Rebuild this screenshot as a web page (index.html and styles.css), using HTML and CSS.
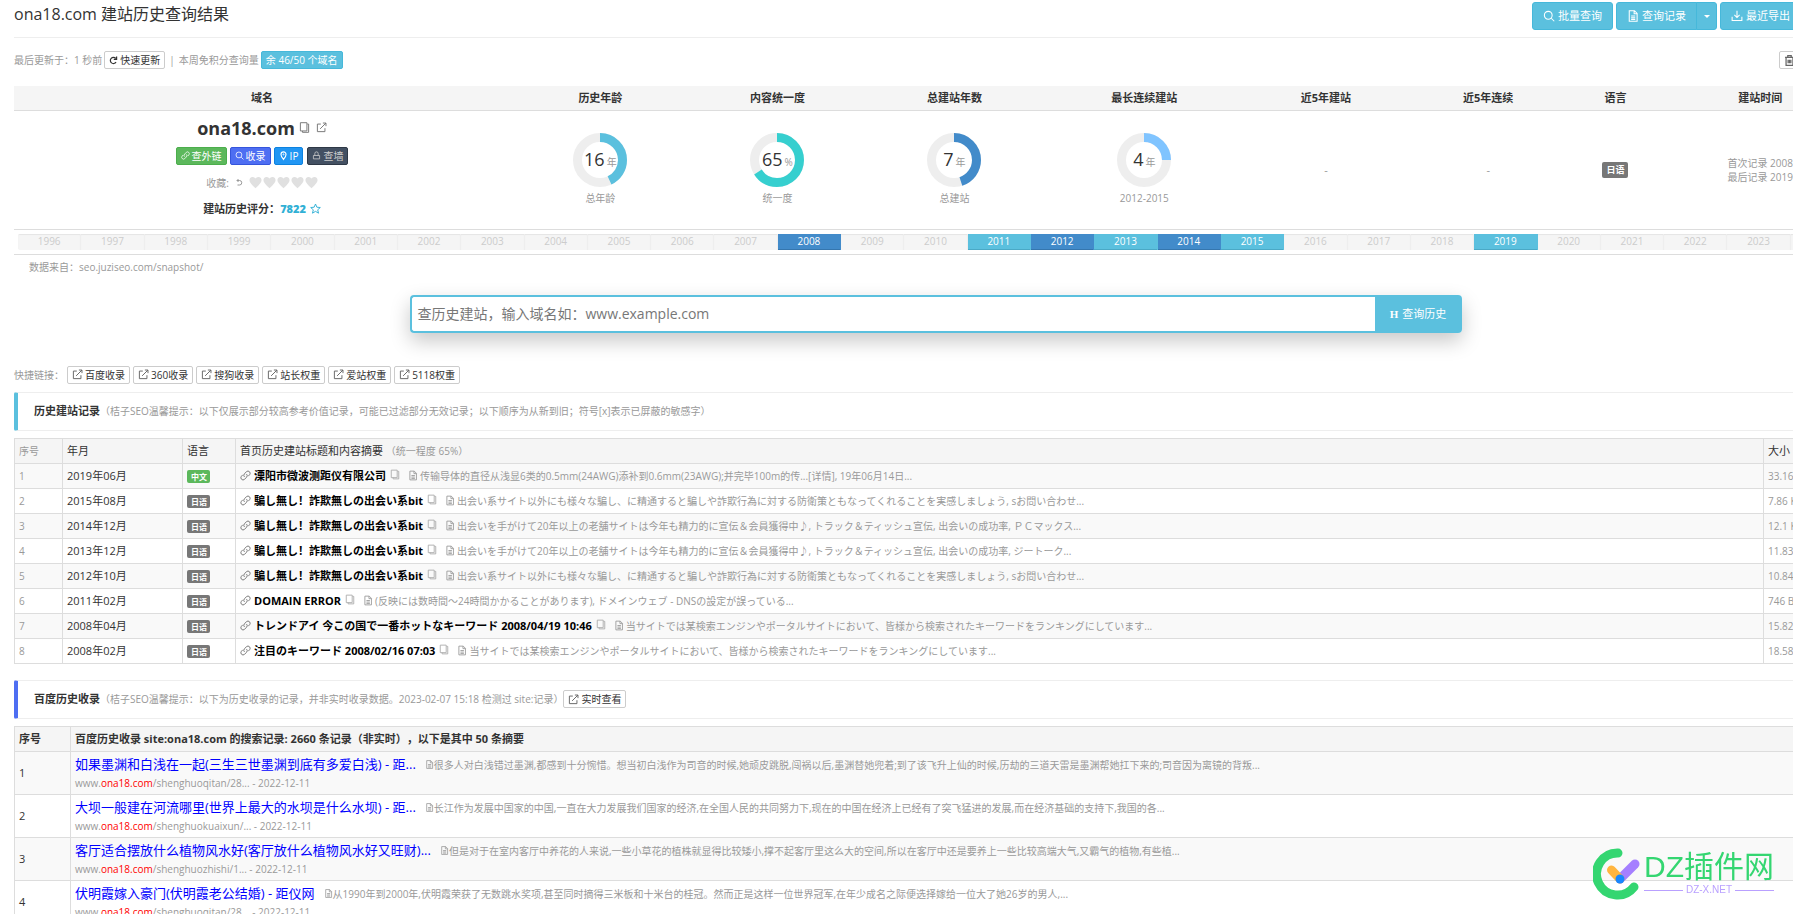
FILE: index.html
```html
<!DOCTYPE html>
<html lang="zh-CN">
<head>
<meta charset="utf-8">
<title>ona18.com 建站历史查询结果</title>
<link rel="stylesheet" href="styles.css">
</head>
<body>
<svg class="sprite" aria-hidden="true">
  <symbol id="search" viewBox="0 0 16 16"><circle cx="7" cy="7" r="5.2"/><path d="M11 11l4 4"/></symbol>
  <symbol id="doc" viewBox="0 0 16 16"><path d="M3 1h7l3.500 3.500V15H3zM9.500 1v4h4M5.500 8h5.500M5.500 10.500h5.500M5.500 12.700h5.500"/></symbol>
  <symbol id="download" viewBox="0 0 16 16"><path d="M8 1v9M4.500 6.500L8 10l3.500-3.500M1.500 9v5h13V9"/></symbol>
  <symbol id="refresh" viewBox="0 0 16 16"><path stroke-width="2.200" d="M12.500 11A5.500 5.500 0 1 1 12 4.200M13.500 1v5h-5"/></symbol>
  <symbol id="trash" viewBox="0 0 16 16"><path stroke-width="1.800" d="M1.500 3.500h13M5.500 3V1h5v2M3 4v11h10V4M6 7v5M8 7v5M10 7v5"/></symbol>
  <symbol id="copy" viewBox="0 0 16 16"><path d="M2 1h9.500v12H2zM12 3h2v12H5v-2"/></symbol>
  <symbol id="out" viewBox="0 0 16 16"><path d="M7 3H2v11h11V9M6 10l8.500-8.500M10 1.500h4.500V6"/></symbol>
  <symbol id="link" viewBox="0 0 16 16"><path d="M6.500 10a3.200 3.200 0 0 1 0-4.500l3-3.200a3.200 3.200 0 0 1 4.500 4.500L12 9M9.500 6a3.200 3.200 0 0 1 0 4.500l-3 3.200A3.200 3.200 0 0 1 2 9.200L4 7"/></symbol>
  <symbol id="pin" viewBox="0 0 16 16"><path stroke-width="2" d="M8 15C5 11 3.500 8.500 3.500 6a4.500 4.500 0 0 1 9 0C12.500 8.500 11 11 8 15z"/><circle cx="8" cy="6" r="1"/></symbol>
  <symbol id="lock" viewBox="0 0 16 16"><path d="M2.500 8h11v6h-11zM5 8V4.500a3 3 0 0 1 6 0V8"/></symbol>
  <symbol id="undo" viewBox="0 0 16 16"><path stroke-width="2" d="M4 4h5a4 4 0 0 1 0 9H5M7 1L4 4l3 3"/></symbol>
  <symbol id="heart" viewBox="0 0 16 16"><path class="solid" d="M8 15C3 10.500.5 8 .5 5A4 4 0 0 1 8 3.200 4 4 0 0 1 15.500 5C15.500 8 13 10.500 8 15z"/></symbol>
  <symbol id="star" viewBox="0 0 16 16"><path d="M8 1.500l2 4.600 5 .5-3.800 3.300 1.200 4.900L8 12.200l-4.400 2.600 1.200-4.900L1 6.600l5-.5z"/></symbol>
</svg>

<main class="page">
  <header class="titlebar">
    <h1>ona18.com 建站历史查询结果</h1>
    <div class="actions">
      <button class="btn"><svg class="ico"><use href="#search"/></svg>批量查询</button>
      <span class="group"><button class="btn"><svg class="ico"><use href="#doc"/></svg>查询记录</button><button class="btn caret" aria-label="展开"></button></span>
      <span class="group"><button class="btn"><svg class="ico"><use href="#download"/></svg>最近导出</button><button class="btn caret" aria-label="展开"></button></span>
    </div>
  </header>

  <div class="status">
    <span>最后更新于：1 秒前</span>
    <button class="mini dark"><svg class="ico"><use href="#refresh"/></svg>快速更新</button>
    <span class="sep">|</span>
    <span>本周免积分查询量</span>
    <a class="mini info" href="#">余 46/50 个域名</a>
    <button class="mini trash" aria-label="删除"><svg class="ico"><use href="#trash"/></svg></button>
  </div>

  <table class="summary">
    <colgroup><col class="c1"><col class="c2"><col class="c3"><col class="c2"><col class="c5"><col class="c6"><col class="c7"><col class="c8"><col></colgroup>
    <thead><tr><th>域名</th><th>历史年龄</th><th>内容统一度</th><th>总建站年数</th><th>最长连续建站</th><th>近5年建站</th><th>近5年连续</th><th>语言</th><th>建站时间</th></tr></thead>
    <tbody><tr>
      <td>
        <div class="domain"><b>ona18.com</b><svg class="ico"><use href="#copy"/></svg><svg class="ico"><use href="#out"/></svg></div>
        <div class="tags">
          <a class="mini green" href="#"><svg class="ico"><use href="#link"/></svg>查外链</a>
          <a class="mini indigo" href="#"><svg class="ico"><use href="#search"/></svg>收录</a>
          <a class="mini blue" href="#"><svg class="ico"><use href="#pin"/></svg>IP</a>
          <a class="mini slate" href="#"><svg class="ico"><use href="#lock"/></svg>查墙</a>
        </div>
        <div class="fav">收藏:<svg class="ico undo"><use href="#undo"/></svg><span class="hearts"><svg><use href="#heart"/></svg><svg><use href="#heart"/></svg><svg><use href="#heart"/></svg><svg><use href="#heart"/></svg><svg><use href="#heart"/></svg></span></div>
        <div class="score">建站历史评分：<b>7822</b><svg class="ico"><use href="#star"/></svg></div>
      </td>
      <td><div class="gauge"><svg viewBox="0 0 54 54"><circle class="track" cx="27" cy="27" r="22.5"/><circle class="arc cyan" cx="27" cy="27" r="22.5" pathLength="100" stroke-dasharray="43 100"/></svg><span class="num">16<small>年</small></span></div><div class="cap">总年龄</div></td>
      <td><div class="gauge"><svg viewBox="0 0 54 54"><circle class="track" cx="27" cy="27" r="22.5"/><circle class="arc teal" cx="27" cy="27" r="22.5" pathLength="100" stroke-dasharray="66 100"/></svg><span class="num">65<small>%</small></span></div><div class="cap">统一度</div></td>
      <td><div class="gauge"><svg viewBox="0 0 54 54"><circle class="track" cx="27" cy="27" r="22.5"/><circle class="arc navy" cx="27" cy="27" r="22.5" pathLength="100" stroke-dasharray="45 100"/></svg><span class="num">7<small>年</small></span></div><div class="cap">总建站</div></td>
      <td><div class="gauge"><svg viewBox="0 0 54 54"><circle class="track" cx="27" cy="27" r="22.5"/><circle class="arc sky" cx="27" cy="27" r="22.5" pathLength="100" stroke-dasharray="25 100"/></svg><span class="num">4<small>年</small></span></div><div class="cap">2012-2015</div></td>
      <td class="muted">-</td>
      <td class="muted">-</td>
      <td><span class="lang big">日语</span></td>
      <td class="muted dates">首次记录 2008<br>最后记录 2019</td>
    </tr></tbody>
  </table>

  <div class="timeline">
    <ol>
      <li>1996</li><li>1997</li><li>1998</li><li>1999</li><li>2000</li><li>2001</li><li>2002</li><li>2003</li><li>2004</li><li>2005</li><li>2006</li><li>2007</li><li class="on deep">2008</li><li>2009</li><li>2010</li><li class="on">2011</li><li class="on deep">2012</li><li class="on">2013</li><li class="on deep">2014</li><li class="on">2015</li><li>2016</li><li>2017</li><li>2018</li><li class="on">2019</li><li>2020</li><li>2021</li><li>2022</li><li>2023</li><li></li>
    </ol>
  </div>
  <p class="source">数据来自：seo.juziseo.com/snapshot/</p>

  <form class="search">
    <input type="text" aria-label="域名" placeholder="查历史建站，输入域名如：www.example.com">
    <button type="button"><b class="h">H</b>查询历史</button>
  </form>

  <nav class="quick">
    <span>快捷链接：</span>
    <a class="mini" href="#"><svg class="ico"><use href="#out"/></svg>百度收录</a>
    <a class="mini" href="#"><svg class="ico"><use href="#out"/></svg>360收录</a>
    <a class="mini" href="#"><svg class="ico"><use href="#out"/></svg>搜狗收录</a>
    <a class="mini" href="#"><svg class="ico"><use href="#out"/></svg>站长权重</a>
    <a class="mini" href="#"><svg class="ico"><use href="#out"/></svg>爱站权重</a>
    <a class="mini" href="#"><svg class="ico"><use href="#out"/></svg>5118权重</a>
  </nav>

  <div class="section"><h2>历史建站记录</h2><span>（桔子SEO温馨提示：以下仅展示部分较高参考价值记录，可能已过滤部分无效记录；以下顺序为从新到旧；符号[x]表示已屏蔽的敏感字）</span></div>

  <table class="grid history">
    <colgroup><col class="no"><col class="ym"><col class="lg"><col><col class="size"></colgroup>
    <thead><tr><th class="muted">序号</th><th>年月</th><th>语言</th><th>首页历史建站标题和内容摘要 <small>（统一程度 65%）</small></th><th>大小</th></tr></thead>
    <tbody>
      <tr><td>1</td><td>2019年06月</td><td><span class="lang zh">中文</span></td><td><svg class="ico chain"><use href="#link"/></svg><a href="#">溧阳市微波测距仪有限公司</a><svg class="ico cp"><use href="#copy"/></svg><svg class="ico dc"><use href="#doc"/></svg><small>传输导体的直径从浅显6类的0.5mm(24AWG)添补到0.6mm(23AWG);并完毕100m的传...[详情], 19年06月14日...</small></td><td>33.16 KB</td></tr>
      <tr><td>2</td><td>2015年08月</td><td><span class="lang">日语</span></td><td><svg class="ico chain"><use href="#link"/></svg><a href="#">騙し無し！詐欺無しの出会い系bit</a><svg class="ico cp"><use href="#copy"/></svg><svg class="ico dc"><use href="#doc"/></svg><small>出会い系サイト以外にも様々な騙し、に精通すると騙しや詐欺行為に対する防衛策ともなってくれることを実感しましょう, sお問い合わせ...</small></td><td>7.86 KB</td></tr>
      <tr><td>3</td><td>2014年12月</td><td><span class="lang">日语</span></td><td><svg class="ico chain"><use href="#link"/></svg><a href="#">騙し無し！詐欺無しの出会い系bit</a><svg class="ico cp"><use href="#copy"/></svg><svg class="ico dc"><use href="#doc"/></svg><small>出会いを手がけて20年以上の老舗サイトは今年も精力的に宣伝＆会員獲得中♪, トラック＆ティッシュ宣伝, 出会いの成功率, ＰＣマックス...</small></td><td>12.1 KB</td></tr>
      <tr><td>4</td><td>2013年12月</td><td><span class="lang">日语</span></td><td><svg class="ico chain"><use href="#link"/></svg><a href="#">騙し無し！詐欺無しの出会い系bit</a><svg class="ico cp"><use href="#copy"/></svg><svg class="ico dc"><use href="#doc"/></svg><small>出会いを手がけて20年以上の老舗サイトは今年も精力的に宣伝＆会員獲得中♪, トラック＆ティッシュ宣伝, 出会いの成功率, ジートーク...</small></td><td>11.83 KB</td></tr>
      <tr><td>5</td><td>2012年10月</td><td><span class="lang">日语</span></td><td><svg class="ico chain"><use href="#link"/></svg><a href="#">騙し無し！詐欺無しの出会い系bit</a><svg class="ico cp"><use href="#copy"/></svg><svg class="ico dc"><use href="#doc"/></svg><small>出会い系サイト以外にも様々な騙し、に精通すると騙しや詐欺行為に対する防衛策ともなってくれることを実感しましょう, sお問い合わせ...</small></td><td>10.84 KB</td></tr>
      <tr><td>6</td><td>2011年02月</td><td><span class="lang">日语</span></td><td><svg class="ico chain"><use href="#link"/></svg><a href="#">DOMAIN ERROR</a><svg class="ico cp"><use href="#copy"/></svg><svg class="ico dc"><use href="#doc"/></svg><small>(反映には数時間〜24時間かかることがあります), ドメインウェブ - DNSの設定が誤っている...</small></td><td>746 B</td></tr>
      <tr><td>7</td><td>2008年04月</td><td><span class="lang">日语</span></td><td><svg class="ico chain"><use href="#link"/></svg><a href="#">トレンドアイ 今この国で一番ホットなキーワード 2008/04/19 10:46</a><svg class="ico cp"><use href="#copy"/></svg><svg class="ico dc"><use href="#doc"/></svg><small>当サイトでは某検索エンジンやポータルサイトにおいて、皆様から検索されたキーワードをランキングにしています...</small></td><td>15.82 KB</td></tr>
      <tr><td>8</td><td>2008年02月</td><td><span class="lang">日语</span></td><td><svg class="ico chain"><use href="#link"/></svg><a href="#">注目のキーワード 2008/02/16 07:03</a><svg class="ico cp"><use href="#copy"/></svg><svg class="ico dc"><use href="#doc"/></svg><small>当サイトでは某検索エンジンやポータルサイトにおいて、皆様から検索されたキーワードをランキングにしています...</small></td><td>18.58 KB</td></tr>
    </tbody>
  </table>

  <div class="section baidu"><h2>百度历史收录</h2><span>（桔子SEO温馨提示：以下为历史收录的记录，并非实时收录数据。2023-02-07 15:18 检测过 site:记录）</span><a class="mini" href="#"><svg class="ico"><use href="#out"/></svg>实时查看</a></div>

  <table class="grid results">
    <colgroup><col class="idx"><col></colgroup>
    <thead><tr><th>序号</th><th>百度历史收录 site:ona18.com 的搜索记录: 2660 条记录（非实时），以下是其中 50 条摘要</th></tr></thead>
    <tbody>
      <tr><td>1</td><td><div class="hit"><a href="#">如果墨渊和白浅在一起(三生三世墨渊到底有多爱白浅) - 距...</a><svg class="ico"><use href="#doc"/></svg><small>很多人对白浅错过墨渊,都感到十分惋惜。想当初白浅作为司音的时候,她顽皮跳脱,闯祸以后,墨渊替她兜着;到了该飞升上仙的时候,历劫的三道天雷是墨渊帮她扛下来的;司音因为离镜的背叛...</small></div><div class="url">www.<em>ona18.com</em>/shenghuoqitan/28... - 2022-12-11</div></td></tr>
      <tr><td>2</td><td><div class="hit"><a href="#">大坝一般建在河流哪里(世界上最大的水坝是什么水坝) - 距...</a><svg class="ico"><use href="#doc"/></svg><small>长江作为发展中国家的中国,一直在大力发展我们国家的经济,在全国人民的共同努力下,现在的中国在经济上已经有了突飞猛进的发展,而在经济基础的支持下,我国的各...</small></div><div class="url">www.<em>ona18.com</em>/shenghuokuaixun/... - 2022-12-11</div></td></tr>
      <tr><td>3</td><td><div class="hit"><a href="#">客厅适合摆放什么植物风水好(客厅放什么植物风水好又旺财)...</a><svg class="ico"><use href="#doc"/></svg><small>但是对于在室内客厅中养花的人来说,一些小草花的植株就显得比较矮小,撑不起客厅里这么大的空间,所以在客厅中还是要养上一些比较高端大气,又霸气的植物,有些植...</small></div><div class="url">www.<em>ona18.com</em>/shenghuozhishi/1... - 2022-12-11</div></td></tr>
      <tr><td>4</td><td><div class="hit"><a href="#">伏明霞嫁入豪门(伏明霞老公结婚) - 距仪网</a><svg class="ico"><use href="#doc"/></svg><small>从1990年到2000年,伏明霞荣获了无数跳水奖项,甚至同时摘得三米板和十米台的桂冠。然而正是这样一位世界冠军,在年少成名之际便选择嫁给一位大了她26岁的男人,...</small></div><div class="url">www.<em>ona18.com</em>/shenghuoqitan/28... - 2022-12-11</div></td></tr>
    </tbody>
  </table>
</main>

<aside class="brand">
  <svg class="mark" viewBox="0 0 48 52" aria-hidden="true">
    <path class="ring" d="M25 5A21 21 0 1 0 41 39"/>
    <path class="long" d="M27 31L42 16"/>
    <path class="short" d="M18.500 22L27 31"/>
    <circle class="dot" cx="27" cy="31" r="4.500"/>
  </svg>
  <div class="brand-text"><strong>DZ插件网</strong><span class="sub">DZ-X.NET</span></div>
</aside>
</body>
</html>
```

FILE: styles.css
```css
* { box-sizing: border-box; }

body {
  margin: 0;
  height: 100vh;
  overflow: hidden;
  background: #fff;
  color: #333;
  font: 11px/16px "Open Sans", "Noto Sans CJK SC", sans-serif;
  text-spacing-trim: space-all;
}

button, input { font: inherit; }
a { color: inherit; text-decoration: none; }
h1, h2, p, ol { margin: 0; padding: 0; font-weight: normal; }
small { font-size: 10px; color: #999; }
.sprite { display: none; }
.muted { color: #999; }

.ico {
  width: 11px;
  height: 11px;
  flex: none;
  fill: none;
  stroke: currentColor;
  stroke-width: 1.4;
  vertical-align: -1px;
}
.solid { fill: currentColor; stroke: none; }

/* the content area runs past the right edge of the window */
.page { margin: 0 -65px 0 14px; white-space: nowrap; }

.titlebar {
  display: flex;
  justify-content: space-between;
  height: 38px;
  padding-right: 37px;
  border-bottom: 1px solid #eee;
}
.titlebar h1 { font-size: 16px; line-height: 29px; }
.actions { display: flex; gap: 3px; padding-top: 2px; }
.group { display: flex; }
.btn {
  display: flex;
  align-items: center;
  gap: 3px;
  height: 28px;
  padding: 0 10px;
  border: 1px solid #46b8da;
  border-radius: 3px;
  background: #5bc0de;
  color: #fff;
}
.btn .ico { width: 12px; height: 12px; }
.group .btn:first-child { border-radius: 3px 0 0 3px; }
.group .caret { width: 21px; margin-left: -1px; padding: 0; justify-content: center; border-radius: 0 3px 3px 0; }
.caret::after { content: ""; border: 3px solid transparent; border-top-color: #fff; border-bottom: 0; }

.mini {
  display: inline-flex;
  align-items: center;
  gap: 2px;
  height: 18px;
  padding: 0 4px;
  border: 1px solid #ccc;
  border-radius: 2px;
  background: #fff;
  color: #333;
  font-size: 10px;
  line-height: 16px;
}
.mini .ico { color: #666; }
.mini.dark .ico { color: #333; width: 9px; }
.mini.info, .mini.green, .mini.indigo, .mini.blue, .mini.slate { color: #fff; }
.tags .mini .ico { width: 9px; color: inherit; }
.mini.info { background: #5bc0de; border-color: #46b8da; }
.mini.green { background: #5cb85c; border-color: #4cae4c; }
.mini.indigo { background: #4e6ef2; border-color: #3555dc; }
.mini.blue { background: #2196f3; border-color: #0d82df; }
.mini.slate { margin-left: 1px; background: #435062; border-color: #2e3846; color: #ccc; }

.status {
  display: flex;
  align-items: center;
  gap: 2px;
  height: 48px;
  padding: 0 37px 4px 0;
  color: #999;
  font-size: 10px;
}
.sep { margin: 0 2px; }
.trash { width: 42px; margin-left: auto; }

.summary { width: 100%; table-layout: fixed; border-collapse: collapse; text-align: center; }
.summary .c1 { width: 26.9%; }
.summary .c2 { width: 9.8%; }
.summary .c3 { width: 9.4%; }
.summary .c5 { width: 10.8%; }
.summary .c6 { width: 8.9%; }
.summary .c7 { width: 8.7%; }
.summary .c8 { width: 5.1%; }
.summary th { height: 24px; padding: 0; background: #f5f5f5; }
.summary td { height: 119px; padding: 0; }
.summary tr { border-bottom: 1px solid #ddd; }
.summary .dates { font-size: 10px; line-height: 14px; }

.domain { display: flex; justify-content: center; align-items: center; gap: 4px; height: 26px; }
.domain b { font-size: 18px; }
.domain .ico { color: #777; }
.domain .ico + .ico { margin-left: 2px; }
.tags { display: flex; justify-content: center; gap: 3px; margin-top: 6px; }
.fav { display: flex; justify-content: center; align-items: center; gap: 6px; height: 36px; color: #999; font-size: 10px; }
.fav .undo { width: 8px; }
.hearts { display: flex; gap: 1px; color: #e0e0e0; }
.hearts svg { width: 13px; height: 13px; }
.score { display: flex; justify-content: center; align-items: center; font-weight: bold; height: 16px; margin-bottom: 8px; }
.score b, .score .ico { color: #31b0d5; }
.score .ico { margin-left: 4px; }

.gauge { position: relative; width: 54px; height: 54px; margin: 0 auto; }
.gauge circle { fill: none; stroke-width: 9; }
.track { stroke: #eee; }
.arc { transform: rotate(-90deg); transform-origin: center; }
.cyan { stroke: #5bc0de; }
.teal { stroke: #36cfcf; }
.navy { stroke: #428bca; }
.sky { stroke: #80c4ff; }
.num { position: absolute; inset: 0; font-size: 18px; line-height: 52px; }
.num small { margin-left: 2px; }
.cap { margin-top: 3px; color: #999; font-size: 10px; }

.lang {
  display: inline-block;
  padding: 0 4px;
  border-radius: 2px;
  background: #777;
  color: #fff;
  font-size: 8px;
  font-weight: bold;
  line-height: 13px;
  vertical-align: middle;
}
.history .lang { padding: 0 4px; width: 23px; text-align: center; }
.lang.zh { background: #5cb85c; }
.lang.big { font-size: 9px; line-height: 16px; }

.timeline { padding: 4px; border-bottom: 1px solid #ddd; }
.timeline ol { display: flex; list-style: none; border-radius: 2px; overflow: hidden; }
.timeline li {
  flex: 1;
  height: 16px;
  background: #f5f5f5;
  border-right: 1px solid #eee;
  box-shadow: inset 0 1px 1px #e5e5e5;
  color: #ccc;
  font-size: 10px;
  line-height: 14px;
  text-align: center;
}
.timeline .on { background: #5bc0de; border-color: #5bc0de; color: #fff; box-shadow: inset 0 -1px 0 #4aa9c6; }
.timeline .deep { background: #428bca; border-color: #428bca; box-shadow: inset 0 -1px 0 #3576ae; }

.source { padding-left: 15px; color: #999; font-size: 10px; line-height: 24px; }

.search {
  display: flex;
  width: 57%;
  height: 38px;
  margin: 16px auto 33px;
  border-radius: 4px;
  box-shadow: 0 8px 20px rgba(0, 0, 0, .22);
}
.search input {
  flex: 1;
  padding: 0 5px;
  border: 2px solid #5bc0de;
  border-right: 0;
  border-radius: 4px 0 0 4px;
  font-size: 14px;
  outline: 0;
}
.search input::placeholder { color: #777; }
.search button { width: 87px; border: 0; border-radius: 0 4px 4px 0; background: #5bc0de; color: #fff; }
.h { margin-right: 4px; font-family: "Liberation Serif", serif; }

.quick { display: flex; align-items: center; gap: 3px; height: 18px; color: #999; font-size: 10px; }

.section {
  display: flex;
  align-items: center;
  height: 39px;
  margin: 8px 0 7px;
  padding-left: 16px;
  border: 1px solid #eee;
  border-left: 4px solid #5bc0de;
  border-radius: 2px;
}
.section h2 { font-size: 11px; font-weight: bold; }
.section span { color: #999; font-size: 10px; }
.section.baidu { margin-top: 16px; border-left-color: #4e6ef2; }

.grid { width: 100%; table-layout: fixed; border-collapse: collapse; }
.grid th, .grid td { padding: 0 4px; border: 1px solid #ddd; text-align: left; overflow: hidden; }
.grid th { height: 25px; background: #f5f5f5; }
.grid tbody tr:nth-child(odd) { background: #f9f9f9; }

.history .no { width: 48px; }
.history .ym { width: 120px; }
.history .lg { width: 53px; }
.history .size { width: 94px; }
.history th { font-weight: normal; }
.history th:first-child, .history td:first-child, .history td:last-child { color: #999; font-size: 10px; }
.history td { height: 25px; }
.history td a { color: #000; font-weight: bold; }
.chain { margin-right: 3px; color: #777; }
.cp { width: 10px; margin: 0 8px 0 4px; color: #aaa; vertical-align: 0; }
.dc { width: 10px; margin-right: 2px; color: #999; }

.results .idx { width: 56px; }
.results td { height: 43px; }
.hit { line-height: 20px; }
.hit a { color: #00f; font-size: 13px; }
.hit .ico { width: 9px; margin-left: 9px; color: #999; }
.url { color: #999; font-size: 10px; }
.url em { color: #f00; font-style: normal; }

.brand { position: fixed; right: 19px; bottom: 14px; display: flex; gap: 3px; }
.mark { width: 48px; height: 52px; fill: none; stroke-linecap: round; stroke-width: 9; }
.ring { stroke: #34d671; }
.long { stroke: #a57fff; }
.short { stroke: #ffb53f; }
.dot { fill: #1787ff; }
.brand-text { display: flex; flex-direction: column; }
.brand-text strong {
  color: #34d671;
  font: 30px/38px "Liberation Sans", "Noto Sans CJK SC", sans-serif;
}
.sub {
  display: flex;
  align-items: center;
  gap: 3px;
  color: #b9a0ff;
  font: 10px/8px "Liberation Sans", sans-serif;
}
.sub::before, .sub::after { content: ""; flex: 1; height: 1px; background: #b9a0ff; }
```
